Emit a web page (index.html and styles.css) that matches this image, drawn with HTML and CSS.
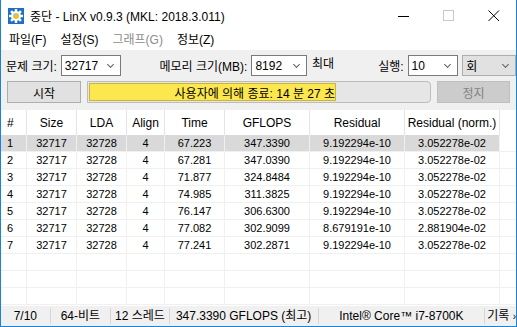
FILE: index.html
```html
<!DOCTYPE html>
<html lang="ko">
  <head>
    <meta charset="UTF-8">
    <meta name="viewport" content="width=device-width, initial-scale=1.0">
    <title>LinX</title>
    <link rel="stylesheet" href="styles.css">
  </head>
  <body>
    <div class="window">
      <!-- title bar -->
      <div class="titlebar">
        <svg class="app-icon" width="16" height="16" viewBox="0 0 16 16">
          <rect x="0" y="0" width="16" height="16" fill="#1f6fc6"/>
          <g fill="#ffffff">
            <circle cx="8" cy="8" r="5"/>
            <rect x="6.8" y="1" width="2.4" height="14"/>
            <rect x="1" y="6.8" width="14" height="2.4"/>
            <rect x="6.8" y="1" width="2.4" height="14" transform="rotate(45 8 8)"/>
            <rect x="6.8" y="1" width="2.4" height="14" transform="rotate(-45 8 8)"/>
          </g>
          <circle cx="8" cy="8" r="3" fill="#f2c21b"/>
          <circle cx="7.3" cy="7.3" r="1.3" fill="#7fd0ff"/>
        </svg>
        <span class="title">중단 - LinX v0.9.3 (MKL: 2018.3.011)</span>
        <div class="caption-buttons">
          <span class="cap-btn"><svg width="12" height="12" viewBox="0 0 12 12"><line x1="0" y1="6.5" x2="11" y2="6.5" stroke="#000" stroke-width="1"/></svg></span>
          <span class="cap-btn"><svg width="12" height="12" viewBox="0 0 12 12"><rect x="0.5" y="0.5" width="10" height="10" fill="none" stroke="#c8c8c8" stroke-width="1"/></svg></span>
          <span class="cap-btn"><svg width="12" height="12" viewBox="0 0 12 12"><path d="M0.5 0.5 L11 11 M11 0.5 L0.5 11" stroke="#000" stroke-width="1"/></svg></span>
        </div>
      </div>

      <!-- menu -->
      <div class="menubar">
        <span class="menu-item">파일(F)</span>
        <span class="menu-item">설정(S)</span>
        <span class="menu-item disabled">그래프(G)</span>
        <span class="menu-item">정보(Z)</span>
      </div>

      <!-- controls -->
      <div class="toolbar">
        <div class="tool-row">
          <span class="label label-size">문제 크기:</span>
          <div class="combo combo-size"><span>32717</span><span class="chev"></span></div>
          <span class="label label-mem">메모리 크기(MB):</span>
          <div class="combo combo-mem"><span>8192</span><span class="chev"></span></div>
          <span class="label label-max">최대</span>
          <span class="label label-runs">실행:</span>
          <div class="combo combo-runs"><span>10</span><span class="chev"></span></div>
          <div class="combo combo-unit"><span>회</span><span class="chev"></span></div>
        </div>
        <div class="tool-row second">
          <button class="btn btn-start">시작</button>
          <div class="progress">
            <div class="progress-fill" style="width: 247px;">사용자에 의해 종료: 14 분 27 초</div>
          </div>
          <button class="btn btn-stop" disabled>정지</button>
        </div>
      </div>

      <!-- results -->
      <div class="results">
        <div class="grid-row head">
          <div class="cell left">#</div>
          <div class="cell">Size</div>
          <div class="cell">LDA</div>
          <div class="cell">Align</div>
          <div class="cell">Time</div>
          <div class="cell">GFLOPS</div>
          <div class="cell">Residual</div>
          <div class="cell">Residual (norm.)</div>
          <div class="cell filler"></div>
        </div>
        <div class="grid-row data selected">
          <div class="cell left">1</div><div class="cell">32717</div><div class="cell">32728</div><div class="cell">4</div><div class="cell">67.223</div><div class="cell">347.3390</div><div class="cell">9.192294e-10</div><div class="cell">3.052278e-02</div><div class="cell filler"></div>
        </div>
        <div class="grid-row data">
          <div class="cell left">2</div><div class="cell">32717</div><div class="cell">32728</div><div class="cell">4</div><div class="cell">67.281</div><div class="cell">347.0390</div><div class="cell">9.192294e-10</div><div class="cell">3.052278e-02</div><div class="cell filler"></div>
        </div>
        <div class="grid-row data">
          <div class="cell left">3</div><div class="cell">32717</div><div class="cell">32728</div><div class="cell">4</div><div class="cell">71.877</div><div class="cell">324.8484</div><div class="cell">9.192294e-10</div><div class="cell">3.052278e-02</div><div class="cell filler"></div>
        </div>
        <div class="grid-row data">
          <div class="cell left">4</div><div class="cell">32717</div><div class="cell">32728</div><div class="cell">4</div><div class="cell">74.985</div><div class="cell">311.3825</div><div class="cell">9.192294e-10</div><div class="cell">3.052278e-02</div><div class="cell filler"></div>
        </div>
        <div class="grid-row data">
          <div class="cell left">5</div><div class="cell">32717</div><div class="cell">32728</div><div class="cell">4</div><div class="cell">76.147</div><div class="cell">306.6300</div><div class="cell">9.192294e-10</div><div class="cell">3.052278e-02</div><div class="cell filler"></div>
        </div>
        <div class="grid-row data">
          <div class="cell left">6</div><div class="cell">32717</div><div class="cell">32728</div><div class="cell">4</div><div class="cell">77.082</div><div class="cell">302.9099</div><div class="cell">8.679191e-10</div><div class="cell">2.881904e-02</div><div class="cell filler"></div>
        </div>
        <div class="grid-row data">
          <div class="cell left">7</div><div class="cell">32717</div><div class="cell">32728</div><div class="cell">4</div><div class="cell">77.241</div><div class="cell">302.2871</div><div class="cell">9.192294e-10</div><div class="cell">3.052278e-02</div><div class="cell filler"></div>
        </div>
        <div class="grid-row data empty">
          <div class="cell"></div><div class="cell"></div><div class="cell"></div><div class="cell"></div><div class="cell"></div><div class="cell"></div><div class="cell"></div><div class="cell"></div><div class="cell filler"></div>
        </div>
        <div class="grid-row data empty">
          <div class="cell"></div><div class="cell"></div><div class="cell"></div><div class="cell"></div><div class="cell"></div><div class="cell"></div><div class="cell"></div><div class="cell"></div><div class="cell filler"></div>
        </div>
        <div class="grid-row data empty">
          <div class="cell"></div><div class="cell"></div><div class="cell"></div><div class="cell"></div><div class="cell"></div><div class="cell"></div><div class="cell"></div><div class="cell"></div><div class="cell filler"></div>
        </div>
      </div>

      <!-- status bar -->
      <div class="statusbar">
        <div class="panel p-runs">7/10</div>
        <div class="panel p-bits">64-비트</div>
        <div class="panel p-threads">12 스레드</div>
        <div class="panel p-peak">347.3390 GFLOPS (최고)</div>
        <div class="panel p-cpu">Intel® Core™ i7-8700K</div>
        <div class="panel p-log">기록 <span class="arrow">›</span></div>
      </div>
    </div>
  </body>
</html>
```

FILE: styles.css
```css
body{
    margin: 0;
    font-family: "Liberation Sans", "Noto Sans CJK KR", sans-serif;
    font-size: 12px;
    color: #000;
    background-color: #ffffff;
}

.window{
    width: 517px;
    height: 327px;
    box-sizing: border-box;
    border: 1px solid #1883d7;
    border-top: none;
    display: flex;
    flex-direction: column;
    background-color: #f0f0f0;
    overflow: hidden;
}

/* title bar */
.titlebar{
    height: 30px;
    background-color: #ffffff;
    display: flex;
    align-items: center;
    padding-left: 7px;
}

.app-icon{
    flex: none;
    margin-top: 1px;
}

.title{
    margin-left: 6px;
    font-size: 12px;
    padding-top: 1px;
}

.caption-buttons{
    margin-left: auto;
    display: flex;
    height: 30px;
}

.cap-btn{
    width: 45px;
    display: flex;
    align-items: center;
    justify-content: center;
    padding-top: 1px;
}

/* menu */
.menubar{
    height: 20px;
    background-color: #ffffff;
    display: flex;
    align-items: center;
    padding-left: 1px;
}

.menu-item{
    padding: 0 7px;
    line-height: 20px;
}

.menu-item.disabled{
    color: #8c8c8c;
}

/* toolbar */
.toolbar{
    height: 60px;
    padding-top: 5px;
    box-sizing: border-box;
}

.tool-row{
    display: flex;
    align-items: center;
    height: 21px;
}

.tool-row.second{
    margin-top: 5px;
    height: 22px;
}

.label{
    white-space: nowrap;
}

.label-size{ margin-left: 5px; }
.label-mem{ margin-left: 39px; }
.label-max{ margin-left: 5px; margin-top: -6px; }
.label-runs{ margin-left: 44px; }

.combo{
    height: 21px;
    box-sizing: border-box;
    border: 1px solid #7a7a7a;
    background-color: #ffffff;
    display: flex;
    align-items: center;
    padding-left: 3px;
    position: relative;
}

.chev{
    margin-left: auto;
    margin-right: 7px;
    width: 4px;
    height: 4px;
    border-right: 1px solid #606060;
    border-bottom: 1px solid #606060;
    transform: rotate(45deg);
    margin-top: -3px;
}

.combo-size{ width: 60px; margin-left: 4px; }
.combo-mem{ width: 56px; margin-left: 4px; }
.combo-runs{ width: 51px; margin-left: 4px; }
.combo-unit{
    width: 54px;
    margin-left: 4px;
    background-color: #e1e1e1;
    border-color: #adadad;
}

.btn{
    font-family: inherit;
    font-size: 12px;
    height: 22px;
    box-sizing: border-box;
    border: 1px solid #adadad;
    background-color: #e1e1e1;
    color: #000;
    padding: 0;
}

.btn-start{
    width: 74px;
    margin-left: 6px;
}

.btn-stop{
    width: 73px;
    margin-left: 6px;
    background-color: #cccccc;
    border-color: #bfbfbf;
    color: #838383;
}

.progress{
    width: 344px;
    height: 22px;
    margin-left: 6px;
    box-sizing: border-box;
    border: 1px solid #bcbcbc;
    border-radius: 0 4px 4px 0;
    background-color: #e6e6e6;
    padding: 1px;
    display: flex;
}

.progress-fill{
    height: 100%;
    box-sizing: border-box;
    background-color: #fce74e;
    border: 1px solid #c9b53a;
    display: flex;
    align-items: center;
    justify-content: flex-end;
    white-space: nowrap;
    padding-right: 0;
}

/* results grid */
.results{
    flex: 1;
    background-color: #ffffff;
    overflow: hidden;
}

.grid-row{
    display: grid;
    grid-template-columns: 26px 50px 50px 38px 60px 85px 95px 95px 16px;
}

.cell{
    box-sizing: border-box;
    text-align: center;
    white-space: nowrap;
    overflow: hidden;
}

.cell.left{
    text-align: left;
    padding-left: 6px;
}

.head .cell{
    height: 25px;
    line-height: 26px;
    border-right: 1px solid #e5e5e5;
}

.head .cell.filler{
    border-right: none;
}

.data .cell{
    height: 17px;
    line-height: 16px;
    font-size: 11px;
    border-right: 1px solid #f0f0f0;
    border-bottom: 1px solid #f0f0f0;
}

.data .cell.filler{
    border-right: none;
}

.selected .cell{
    background-color: #d9d9d9;
}

.selected .cell.filler{
    background-color: #ffffff;
}

/* status bar */
.statusbar{
    height: 20px;
    display: flex;
    align-items: center;
    background-color: #f0f0f0;
}

.panel{
    box-sizing: border-box;
    height: 16px;
    line-height: 16px;
    text-align: center;
    border-right: 1px solid #d7d7d7;
    white-space: nowrap;
}

.p-runs{ width: 50px; }
.p-bits{ width: 61px; }
.p-threads{ width: 59px; }
.p-peak{ width: 150px; }
.p-cpu{ width: 168px; }
.p-log{
    flex: 1;
    border-right: none;
    text-align: left;
    padding-left: 2px;
}

.arrow{
    font-size: 10px;
}
```
